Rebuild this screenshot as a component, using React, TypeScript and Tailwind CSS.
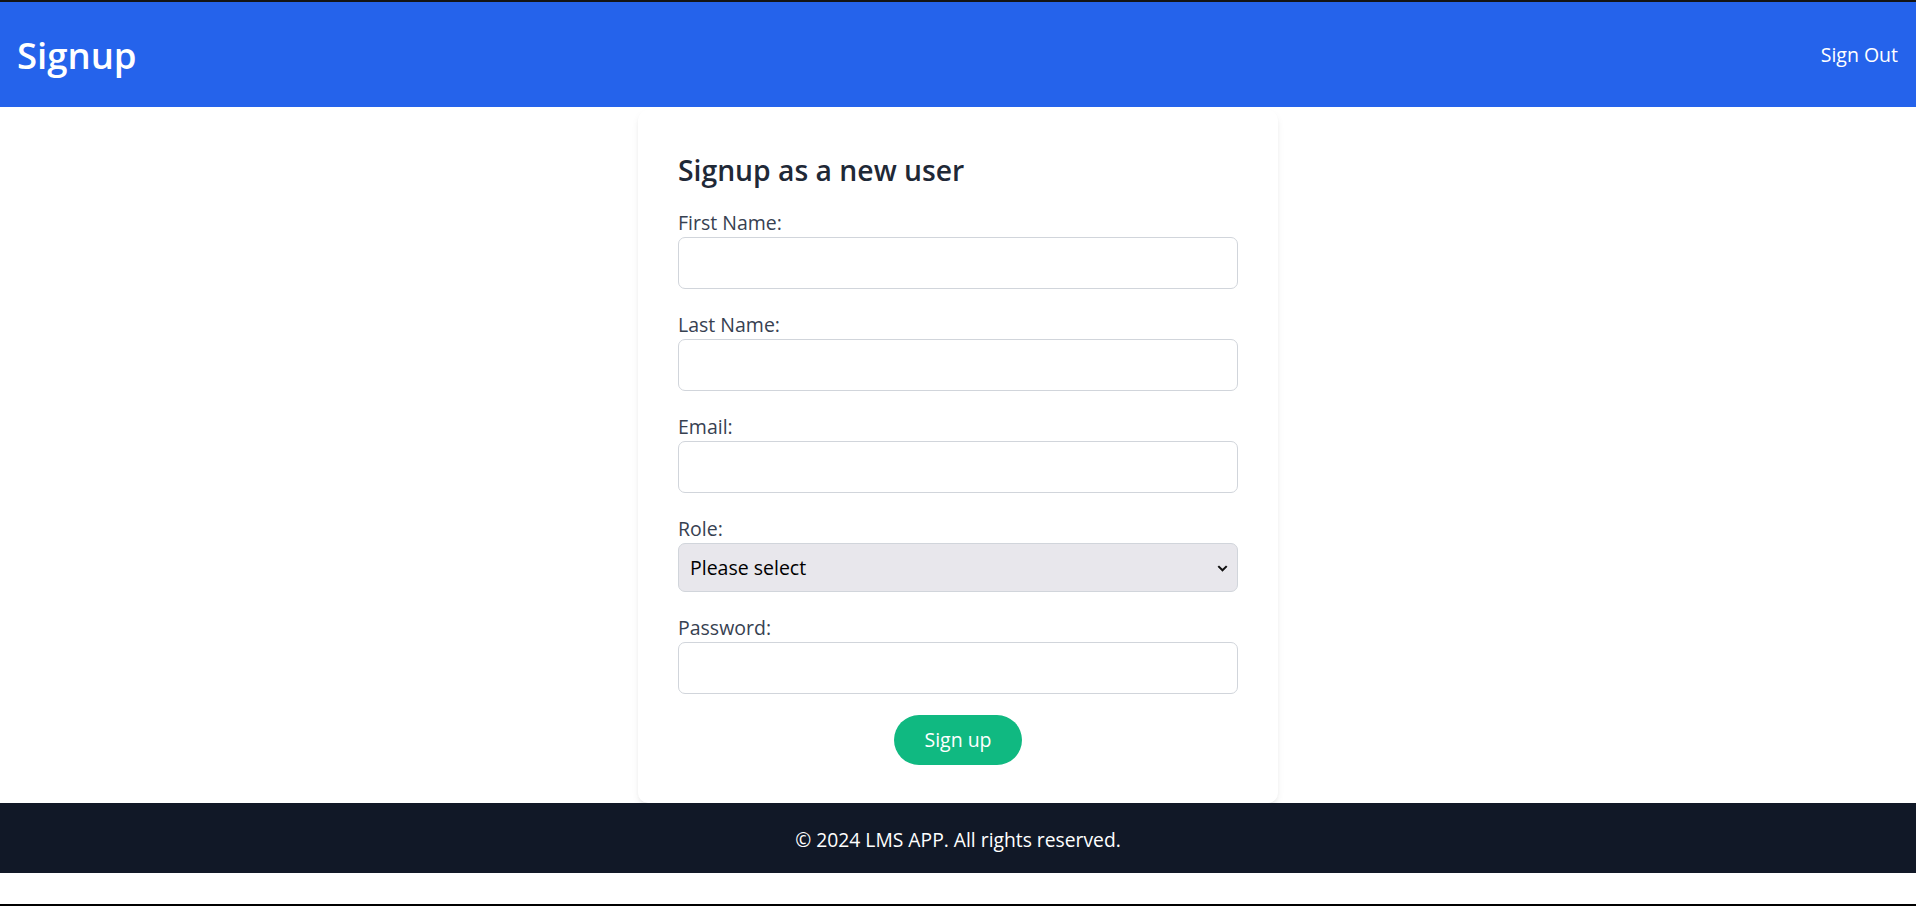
import React from 'react';

const fields = [
  { id: 'firstName', label: 'First Name:', type: 'text' },
  { id: 'lastName', label: 'Last Name:', type: 'text' },
  { id: 'email', label: 'Email:', type: 'email' },
];

function Field({ id, label, type }: { id: string; label: string; type: string }) {
  return (
    <div className="mb-[22px]">
      <label htmlFor={id} className="block h-[28px] text-[19.5px] leading-[28px] text-[#374151]">
        {label}
      </label>
      <input
        id={id}
        type={type}
        className="block h-[52px] w-full rounded-[7px] border border-[#d1d5db] bg-white px-3 text-[20px] outline-none"
      />
    </div>
  );
}

export default function App() {
  return (
    <div
      className="flex h-[906px] flex-col overflow-hidden border-t-2 border-b-2 border-t-[#141414] border-b-black bg-white"
      style={{ fontFamily: '"Open Sans", "Noto Sans", sans-serif' }}
    >
      {/* Header */}
      <header className="flex h-[105px] shrink-0 items-center justify-between bg-[#2563eb] pl-[17px] pr-[18px]">
        <h1 className="pt-[2px] text-[36.5px] font-semibold leading-[45px] text-white">Signup</h1>
        <a href="#" className="text-[19.5px] text-white">
          Sign Out
        </a>
      </header>

      {/* Form */}
      <main className="flex justify-center pt-[3px]">
        <div className="w-[640px] rounded-[10px] bg-white px-10 pb-[38px] pt-10 shadow-[0_4px_8px_-2px_rgba(0,0,0,0.1),0_2px_4px_-2px_rgba(0,0,0,0.08)]">
          <h2 className="mb-[19px] text-[28.3px] font-semibold leading-[40px] text-[#1f2937]">
            Signup as a new user
          </h2>
          <form onSubmit={(e) => e.preventDefault()}>
            {fields.map((f) => (
              <Field key={f.id} {...f} />
            ))}

            <div className="mb-[22px]">
              <label htmlFor="role" className="block h-[28px] text-[19.5px] leading-[28px] text-[#374151]">
                Role:
              </label>
              <div className="relative">
                <select
                  id="role"
                  className="block h-[49px] w-full appearance-none rounded-[7px] border border-[#d1d5db] bg-[#e8e7ec] pl-[11px] text-[19.5px] text-black outline-none"
                >
                  <option>Please select</option>
                  <option>Student</option>
                  <option>Teacher</option>
                </select>
                <svg
                  className="pointer-events-none absolute right-[8px] top-1/2 h-[15px] w-[15px] -translate-y-1/2"
                  viewBox="0 0 16 16"
                  fill="none"
                  stroke="#111"
                  strokeWidth="2.2"
                >
                  <path d="M3.5 6l4.5 4.5L12.5 6" />
                </svg>
              </div>
            </div>

            <Field id="password" label="Password:" type="password" />

            <div className="-mt-px flex justify-center">
              <button
                type="submit"
                className="h-[50px] rounded-full bg-[#10b981] px-[30px] text-[19.5px] text-white"
              >
                Sign up
              </button>
            </div>
          </form>
        </div>
      </main>

      {/* Footer */}
      <footer className="flex h-[70px] shrink-0 items-center justify-center bg-[#111827] pt-[4px]">
        <p className="text-[19.3px] text-white">© 2024 LMS APP. All rights reserved.</p>
      </footer>
    </div>
  );
}
